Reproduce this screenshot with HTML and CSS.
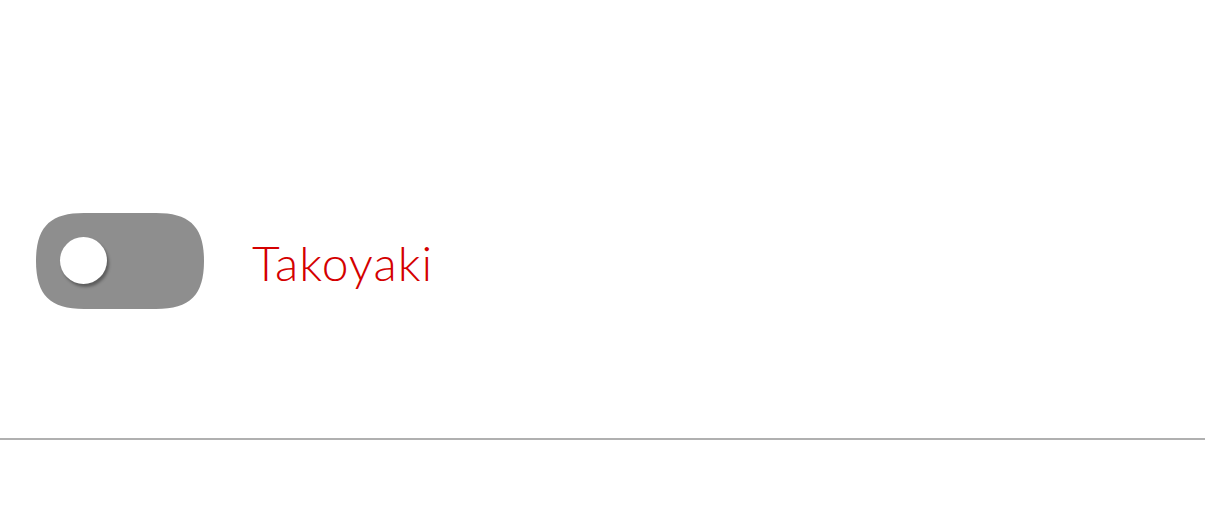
FILE: index.html
```html
<!DOCTYPE html>
<html>
<head>
<meta charset="utf-8">
<link rel="stylesheet" href="styles.css">
</head>
<body>
<div class="item">
  <div class="toggle">
    <svg class="track" width="168" height="96" viewBox="0 0 168 96"><path d="M48 0 H120 C154 0 168 14 168 48 C168 82 154 96 120 96 H48 C14 96 0 82 0 48 C0 14 14 0 48 0 Z" fill="#8e8e8e"/></svg>
    <span class="knob"></span>
  </div>
  <span class="label">Takoyaki</span>
</div>
<hr class="divider">
</body>
</html>
```
FILE: styles.css
```css
html, body { margin: 0; padding: 0; background: #fff; }
body { width: 1206px; height: 522px; overflow: hidden; }
.item {
  display: flex;
  align-items: center;
  gap: 48px;
  padding: 213px 0 0 36px;
}
.toggle {
  position: relative;
  width: 168px;
  height: 96px;
  flex: none;
}
.track { display: block; }
.knob {
  position: absolute;
  left: 24px;
  top: 24px;
  width: 47px;
  height: 47px;
  border-radius: 50%;
  background: #fff;
  box-shadow: 2px 3px 3px rgba(0,0,0,0.35);
}
.label {
  font-family: "Lato", "Liberation Sans", sans-serif;
  font-weight: 300;
  font-size: 48px;
  letter-spacing: 1px;
  color: #d40000;
  margin-top: 2px;
}
.divider {
  margin: 129px 0 0 0;
  border: 0;
  height: 2px;
  width: 1205px;
  background: #b0b0b0;
}
```
